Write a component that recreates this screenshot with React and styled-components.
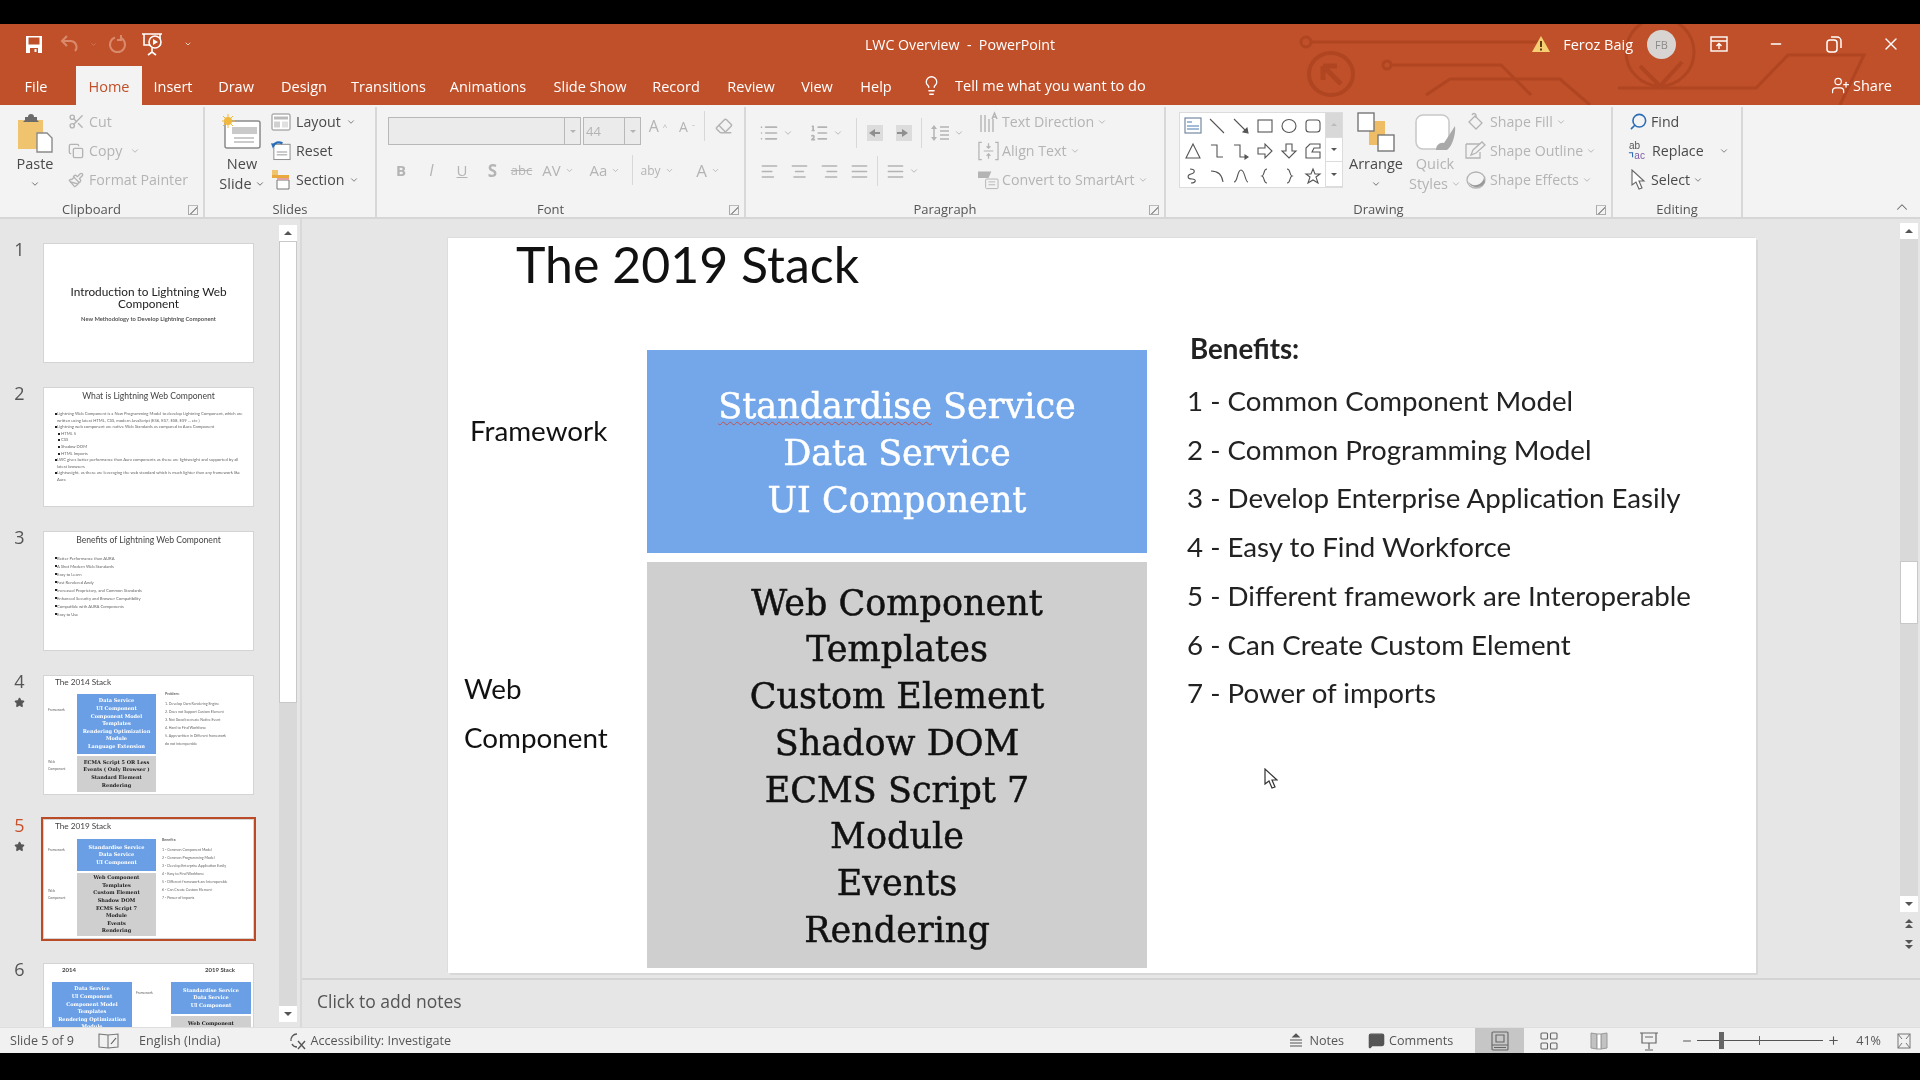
import React from "react";
import styled, { createGlobalStyle } from "styled-components";
import {
  AlignCenter, AlignJustify, AlignLeft, AlignRight, ChevronDown, ChevronUp, Copy, Eraser, Lightbulb,
  List, ListOrdered, MessageSquare, Minus, Paintbrush, Plus, Scissors, Search, Star, UserPlus, X,
} from "lucide-react";

const UI_FONT = `"Open Sans", "Noto Sans", sans-serif`;
const SLIDE_FONT = `Lato, "Open Sans", sans-serif`;
const SLAB_FONT = `"DejaVu Serif", "Liberation Serif", serif`;

const ORANGE = "#c0502a";
const OFF = "#b4b4b4";
const ON = "#4a4a4a";

const GlobalStyle = createGlobalStyle`
  html, body { margin: 0; padding: 0; background: #000; }
  body { font-family: ${UI_FONT}; }
  * { box-sizing: border-box; }
`;

const Screen = styled.div`
  width: 1920px;
  height: 1080px;
  background: #000;
  padding: 24px 0 27px;
  overflow: hidden;
  filter: blur(0.45px);
`;

const Window = styled.div`
  height: 1029px;
  display: flex;
  flex-direction: column;
  background: #e6e6e6;
`;

/* title bar + tabs */
const Header = styled.header`
  position: relative;
  height: 81px;
  background: ${ORANGE};
  color: #fff;
  flex: none;
`;

const Circuit = styled.svg`
  position: absolute;
  top: 0;
  left: 1220px;
  pointer-events: none;
`;

const TitleRow = styled.div`
  position: relative;
  height: 42px;
  padding-bottom: 2px;
  display: grid;
  grid-template-columns: 1fr auto 1fr;
  align-items: center;
`;

const Quick = styled.div`
  display: flex;
  align-items: center;
  padding-left: 14px;
`;

const QuickBtn = styled.span`
  width: ${(p) => p.$w || 24}px;
  height: 20px;
  display: inline-flex;
  align-items: center;
  justify-content: center;
`;

const DocTitle = styled.div`
  font-size: 14.2px;
  white-space: pre;
`;

const Account = styled.div`
  display: flex;
  align-items: center;
  justify-content: flex-end;
`;

const UserName = styled.span`
  font-size: 14.5px;
  margin-left: 12px;
`;

const Avatar = styled.span`
  width: 29px;
  height: 29px;
  border-radius: 50%;
  margin: 0 0 0 14px;
  background: #d8d4d2;
  color: #8a8a8a;
  font-size: 11px;
  display: flex;
  align-items: center;
  justify-content: center;
`;

const WinBtn = styled.span`
  width: 57.5px;
  margin-left: ${(p) => p.$ml || 0}px;
  display: flex;
  justify-content: center;
  align-items: center;
`;

const TabRow = styled.nav`
  position: relative;
  height: 39px;
  display: flex;
  align-items: stretch;
  padding-left: 21px;
`;

const Tab = styled.div`
  display: flex;
  align-items: center;
  justify-content: center;
  font-size: 14.5px;
  padding-top: 1px;
  width: ${(p) => p.$w}px;
  margin-right: ${(p) => p.$mr || 0}px;
  ${(p) => p.$active && `background: #f3f3f3; color: ${ORANGE};`}
`;

const TellMe = styled.div`
  display: flex;
  align-items: center;
  gap: 13px;
  margin-left: 12px;
  font-size: 14.5px;
`;

const Share = styled.div`
  margin-left: auto;
  padding-right: 28px;
  display: flex;
  align-items: center;
  gap: 3px;
  font-size: 14.5px;
`;

/* ribbon */
const Ribbon = styled.section`
  position: relative;
  height: 114px;
  flex: none;
  background: #f3f3f3;
  border-bottom: 2px solid #d6d6d6;
  display: flex;
`;

const Group = styled.div`
  position: relative;
  width: ${(p) => p.$w}px;
  margin-top: 2px;
  height: 110px;
  border-right: 2px solid #d8d8d8;
  display: flex;
  flex-direction: column;
`;

const GroupBody = styled.div`
  height: 94px;
  display: flex;
  padding-left: ${(p) => p.$pl || 0}px;
`;

const GroupLabel = styled.div`
  height: 16px;
  line-height: 16px;
  font-size: 13px;
  color: #555;
  text-align: center;
  padding-right: ${(p) => (p.$launcher ? 20 : 0)}px;
`;

const Launcher = styled.span`
  position: absolute;
  right: 5px;
  bottom: 2px;
  width: 10px;
  height: 10px;
  border: 1px solid #aaa;
  border-top-color: #bbb;
  background: linear-gradient(135deg, transparent 55%, #999 55%, #999 65%, transparent 65%);
`;

const Large = styled.div`
  width: ${(p) => p.$w || 64}px;
  flex: none;
  margin-left: ${(p) => p.$ml || 0}px;
  display: flex;
  flex-direction: column;
  align-items: center;
  padding-top: ${(p) => p.$pt ?? 7}px;
  color: ${(p) => (p.$off ? OFF : ON)};
  font-size: 14.5px;
  line-height: 20px;
`;

const LargeIcon = styled.div`
  height: ${(p) => p.$h || 40}px;
  display: flex;
  align-items: flex-start;
  justify-content: center;
`;

const LineChev = styled.div`
  display: flex;
  align-items: center;
  justify-content: center;
  gap: 3px;
  height: 20px;
`;

const SmallCol = styled.div`
  margin-left: ${(p) => p.$ml || 0}px;
  flex: none;
`;

const SmallItem = styled.div`
  height: 29px;
  display: flex;
  align-items: center;
  gap: ${(p) => p.$gap ?? 5}px;
  color: ${(p) => (p.$off ? OFF : ON)};
  font-size: 14.2px;
  white-space: nowrap;
`;

const IconSlot = styled.span`
  width: ${(p) => p.$w || 20}px;
  display: inline-flex;
  justify-content: center;
  color: ${(p) => (p.$off ? OFF : "#666")};
`;

const ToolStack = styled.div`
  flex: none;
  width: ${(p) => p.$w}px;
`;

const FontBox = styled.div`
  display: flex;
  height: 28px;
  margin-top: 10px;
`;

const Combo = styled.div`
  width: ${(p) => p.$w}px;
  margin-right: 2px;
  border: 1px solid #b8b8b8;
  background: #ebebeb;
  display: flex;
  justify-content: space-between;
  align-items: stretch;
  color: ${OFF};
  font-size: 13px;
  line-height: 26px;
  padding-left: 2px;
`;

const ComboDrop = styled.span`
  width: 16px;
  border-left: 1px solid #b8b8b8;
  display: flex;
  align-items: center;
  justify-content: center;
`;

const ToolRow = styled.div`
  display: flex;
  align-items: center;
  height: ${(p) => p.$h || 26}px;
  margin-top: ${(p) => p.$mt || 0}px;
  margin-left: ${(p) => p.$ml || 0}px;
`;

const Tool = styled.span`
  width: ${(p) => p.$w || 30}px;
  flex: none;
  display: inline-flex;
  align-items: center;
  justify-content: ${(p) => (p.$start ? "flex-start" : "center")};
  padding-left: ${(p) => (p.$start ? 5 : 0)}px;
  gap: 4px;
  color: ${OFF};
  font-size: ${(p) => p.$fs || 15}px;
  font-weight: ${(p) => (p.$bold ? 700 : 400)};
  font-style: ${(p) => (p.$italic ? "italic" : "normal")};
  text-decoration: ${(p) => (p.$under ? "underline" : p.$strike ? "line-through" : "none")};
`;

const GrowMark = styled.sup`
  font-size: 8px;
`;

const ToolSep = styled.span`
  width: 1px;
  height: 30px;
  background: #d8d8d8;
  margin: 0 ${(p) => p.$m || 9}px;
  flex: none;
`;

const Gallery = styled.div`
  margin: 5px 0 0 13px;
  width: 164px;
  height: 76px;
  background: #fff;
  border: 1px solid #dcdcdc;
  display: flex;
  flex: none;
`;

const ShapeGrid = styled.div`
  flex: 1;
  display: grid;
  grid-template-columns: repeat(6, 24px);
  grid-auto-rows: 25px;
  justify-items: center;
  align-items: center;
  padding-left: 1px;
`;

const GalleryBtns = styled.div`
  width: 18px;
  display: flex;
  flex-direction: column;
  border-left: 1px solid #dcdcdc;
`;

const GalleryBtn = styled.span`
  flex: 1;
  display: flex;
  align-items: center;
  justify-content: center;
  background: ${(p) => (p.$off ? "#d8d8d8" : "#fff")};
  border-bottom: 1px solid #dcdcdc;
`;

const Tri = styled.span`
  width: 0;
  height: 0;
  border-left: ${(p) => p.$s || 5}px solid transparent;
  border-right: ${(p) => p.$s || 5}px solid transparent;
  ${(p) => (p.$up ? "border-bottom" : "border-top")}: ${(p) => p.$s || 5}px solid ${(p) => p.$c || "#555"};
`;

const Collapse = styled.span`
  position: absolute;
  right: 9px;
  bottom: 1px;
  color: #666;
  display: flex;
`;

const FindGlass = styled(Search)`
  transform: scaleX(-1);
`;

/* main area */
const Main = styled.main`
  flex: 1;
  display: flex;
  min-height: 0;
`;

const ThumbPane = styled.aside`
  width: 302px;
  flex: none;
  display: flex;
  border-right: 2px solid #d9d9d9;
  padding-right: 3px;
`;

const ThumbList = styled.div`
  flex: 1;
  overflow: hidden;
  padding-top: 25px;
`;

const ThumbRow = styled.div`
  display: flex;
  height: 118px;
  margin-bottom: 26px;
`;

const ThumbNum = styled.div`
  width: 44px;
  padding-right: 5px;
  margin-top: -5px;
  text-align: center;
  font-size: 18px;
  line-height: 20px;
  color: ${(p) => (p.$active ? "#c8502a" : "#555")};
  display: flex;
  flex-direction: column;
  align-items: center;
  gap: 6px;
`;

const Mini = styled.div`
  position: relative;
  width: 209px;
  height: 118px;
  flex: none;
  background: #fff;
  font-family: ${SLIDE_FONT};
  color: #333;
  overflow: hidden;
  box-shadow: 0 0 0 1px #d4d4d4;
`;

const MiniFrame = styled.div`
  width: 209px;
  height: 118px;
  flex: none;
  outline: ${(p) => (p.$active ? `3px solid #bb4a26` : "none")};
`;

const MiniCover = styled.div`
  height: 100%;
  display: flex;
  flex-direction: column;
  justify-content: center;
  align-items: center;
  text-align: center;
  padding: 2px 22px 0;
  font-size: 11.8px;
  line-height: 12px;
  color: #222;
`;

const MiniSub = styled.div`
  font-size: 5.8px;
  font-weight: 700;
  line-height: 8px;
  margin-top: 5px;
  white-space: nowrap;
  color: #555;
`;

const MiniHead = styled.div`
  text-align: center;
  font-size: 8.6px;
  line-height: 12px;
  padding-top: 2px;
  color: #444;
`;

const MiniBullets = styled.ul`
  margin: ${(p) => p.$mt}px 0 0;
  padding: 0 8px 0 13px;
  font-size: 4.2px;
  line-height: ${(p) => p.$lh}px;
  color: #666;
  list-style: none;
`;

const MiniBullet = styled.li`
  position: relative;
  padding-left: ${(p) => (p.$sub ? 4 : 0)}px;
  &::before {
    content: "";
    position: absolute;
    left: ${(p) => (p.$sub ? 1 : -2)}px;
    top: 2px;
    width: 2px;
    height: 2px;
    background: #222;
  }
`;

const MiniStackTitle = styled.div`
  font-size: 8.2px;
  line-height: 12px;
  padding: 0 0 0 11px;
  height: ${(p) => p.$h}px;
  color: #444;
`;

const MiniBody = styled.div`
  display: grid;
  grid-template-columns: 33px 79px 1fr;
`;

const MiniLabels = styled.div`
  display: flex;
  flex-direction: column;
  font-size: 3.4px;
  color: #666;
  padding-left: 4px;
`;

const MiniLabel = styled.div`
  height: ${(p) => p.$h}px;
  padding-top: ${(p) => p.$pt}px;
  line-height: 7px;
`;

const MiniBox = styled.div`
  background: ${(p) => (p.$blue ? "#6a9fe6" : "#cfcfcf")};
  color: ${(p) => (p.$blue ? "#fff" : "#222")};
  font-family: ${SLAB_FONT};
  font-size: 5px;
  font-weight: 700;
  line-height: 7.6px;
  height: ${(p) => p.$h}px;
  margin-bottom: ${(p) => p.$mb || 0}px;
  white-space: nowrap;
  overflow: hidden;
  display: flex;
  flex-direction: column;
  justify-content: center;
  align-items: center;
`;

const MiniNotes = styled.div`
  font-size: 3.6px;
  line-height: 8px;
  color: #666;
  margin-top: ${(p) => p.$mt}px;
  padding: 0 2px 0 ${(p) => p.$pl}px;
  white-space: nowrap;
`;

const MiniNotesHead = styled.div`
  font-weight: 700;
  margin-bottom: 2px;
`;

const MiniDouble = styled.div`
  display: grid;
  grid-template-columns: 80px 39px 80px;
  padding: 0 2px 0 8px;
`;

const MiniYears = styled.div`
  display: flex;
  justify-content: space-between;
  font-size: 6px;
  line-height: 10px;
  padding: 1px 18px 7px 18px;
  color: #444;
  font-weight: 700;
`;

const Scroll = styled.div`
  width: ${(p) => p.$w || 18}px;
  flex: none;
  display: flex;
  flex-direction: column;
  padding-top: ${(p) => p.$pt || 6}px;
  margin-right: ${(p) => p.$mr || 0}px;
`;

const ScrollBtn = styled.span`
  height: 16px;
  flex: none;
  background: #fff;
  display: flex;
  align-items: center;
  justify-content: center;
`;

const ScrollPlain = styled(ScrollBtn)`
  background: transparent;
  height: ${(p) => p.$h}px;
  flex-direction: column;
  gap: 1px;
`;

const ScrollTrack = styled.div`
  background: #d9d9d9;
  flex: ${(p) => (p.$h ? "none" : 1)};
  height: ${(p) => (p.$h ? `${p.$h}px` : "auto")};
`;

const ScrollThumb = styled.div`
  background: #fff;
  height: ${(p) => p.$h}px;
  flex: none;
  border: 1px solid #c8c8c8;
`;

const Editor = styled.div`
  flex: 1;
  min-width: 0;
  display: flex;
  flex-direction: column;
`;

const Workspace = styled.div`
  height: 761px;
  flex: none;
  display: flex;
  border-bottom: 2px solid #d4d4d4;
`;

const Stage = styled.div`
  flex: 1;
  padding: 19px 0 0 146px;
`;

const Slide = styled.article`
  position: relative;
  width: 1308px;
  height: 735px;
  background: #fff;
  box-shadow: 2px 2px 0 #d8d8d8, -1px -1px 0 #dddddd;
  font-family: ${SLIDE_FONT};
  color: #111;
  overflow: hidden;
`;

const SlideTitle = styled.h1`
  margin: 0;
  height: 92px;
  padding: 0 0 0 68px;
  font-size: 50px;
  font-weight: 400;
  line-height: 52px;
`;

const SlideBody = styled.div`
  display: grid;
  grid-template-columns: 199px 500px 1fr;
`;

const Labels = styled.div`
  font-size: 27.8px;
  padding-top: 20px;
`;

const Label = styled.div`
  height: ${(p) => p.$h}px;
  padding-left: ${(p) => p.$pl}px;
  padding-top: ${(p) => p.$pt}px;
  line-height: 49px;
`;

const Boxes = styled.div`
  padding-top: 20px;
  display: flex;
  flex-direction: column;
  gap: 9px;
`;

const Box = styled.div`
  height: ${(p) => p.$h}px;
  padding-top: ${(p) => (p.$blue ? 4 : 3)}px;
  background: ${(p) => (p.$blue ? "#74a7ea" : "#cfcfcf")};
  color: ${(p) => (p.$blue ? "#fff" : "#111")};
  font-family: ${SLAB_FONT};
  font-size: 35px;
  -webkit-text-stroke: 0.5px currentColor;
  line-height: ${(p) => p.$lh}px;
  display: flex;
  flex-direction: column;
  justify-content: center;
  text-align: center;
`;

const Squiggle = styled.span`
  text-decoration: underline wavy #c0524d 1px;
  text-underline-offset: 3px;
`;

const Benefits = styled.div`
  padding-left: 40px;
  font-size: 27.7px;
  color: #222;
`;

const BenefitsHead = styled.div`
  padding-left: 3px;
  font-weight: 700;
  line-height: 38px;
  margin-bottom: 9px;
`;

const BenefitItem = styled.div`
  line-height: 48.7px;
  white-space: nowrap;
`;

const Pointer = styled.svg`
  position: absolute;
  left: 816px;
  top: 530px;
`;

const NotesBar = styled.div`
  flex: 1;
  padding: 9px 0 0 15px;
  font-size: 17.5px;
  color: #555;
`;

/* status bar */
const Status = styled.footer`
  height: 26px;
  flex: none;
  display: flex;
  align-items: stretch;
  background: #f1f1f1;
  border-top: 1px solid #dedede;
  color: #555;
  font-size: 12.6px;
  padding-right: 9px;
`;

const StatusText = styled.span`
  flex: none;
  display: flex;
  align-items: center;
  gap: ${(p) => p.$gap || 4}px;
  margin-left: ${(p) => (p.$auto ? "auto" : `${p.$ml || 0}px`)};
  white-space: nowrap;
  color: #555;
`;

const StatusView = styled.span`
  flex: none;
  width: ${(p) => p.$w || 50}px;
  margin-left: ${(p) => p.$ml || 0}px;
  display: flex;
  align-items: center;
  justify-content: center;
  background: ${(p) => (p.$active ? "#c6c6c6" : "transparent")};
`;

const Zoomer = styled.div`
  flex: none;
  display: flex;
  align-items: center;
  margin-left: 7px;
  gap: 4px;
`;

const ZoomTrack = styled.span`
  position: relative;
  width: 126px;
  height: 1px;
  background: #555;
`;

const ZoomThumb = styled.span`
  position: absolute;
  left: 22px;
  top: -8px;
  width: 5px;
  height: 17px;
  background: #666;
`;

const ZoomTick = styled.span`
  position: absolute;
  left: 62px;
  top: -4px;
  width: 1px;
  height: 9px;
  background: #666;
`;

/* drawings */
const SaveIcon = () => (
  <svg width="18" height="19" viewBox="0 0 18 19" fill="none">
    <path d="M1 1h16v17H1z" fill="#fff" />
    <path d="M3.5 2.5h11v7h-11z" fill={ORANGE} />
    <path d="M5 13h8v5H5z" fill={ORANGE} />
    <path d="M9.5 14h2v3h-2z" fill="#fff" />
  </svg>
);

const UndoIcon = ({ c }) => (
  <svg width="20" height="20" viewBox="0 0 20 20" fill="none" stroke={c} strokeWidth="2">
    <path d="M7 2 2 7l5 5" />
    <path d="M2 7h9a6 6 0 0 1 4 10" />
  </svg>
);

const RedoIcon = ({ c }) => (
  <svg width="20" height="20" viewBox="0 0 20 20" fill="none" stroke={c} strokeWidth="2">
    <path d="M12 3.500a7.500 7.500 0 1 1-5 0" />
    <path d="M13 1v5h-4" />
  </svg>
);

const PresentIcon = () => (
  <svg width="22" height="24" viewBox="0 0 22 24" fill="none" stroke="#fff" strokeWidth="1.6">
    <path d="M0 2h20M2 2v11h16V2" />
    <path d="M10 14v6M6 23l4-3 4 3" />
    <circle cx="13" cy="10" r="6" fill={ORANGE} />
    <path d="M11 7l5 3-5 3z" fill="#fff" stroke="none" />
  </svg>
);

const WarningIcon = () => (
  <svg width="20" height="18" viewBox="0 0 20 18">
    <path d="M10 1l9 16H1z" fill="#f5cf72" />
    <path d="M9 6h2v6H9zM9 13.500h2v2H9z" fill="#5b3a1a" />
  </svg>
);

const PasteIcon = () => (
  <svg width="37" height="40" viewBox="0 0 37 40" fill="none">
    <path d="M1 6h25v29H1z" fill="#f0c36e" />
    <path d="M8 6V3h3a3 3 0 0 1 6 0h3v3l2 2H6z" fill="#6b6b6b" />
    <path d="M20 19h10l5 5v14H20z" fill="#fff" stroke="#8a8a8a" strokeWidth="1.4" />
  </svg>
);

const NewSlideIcon = () => (
  <svg width="40" height="36" viewBox="0 0 40 36" fill="none">
    <rect x="3" y="7" width="35" height="27" rx="2" fill="#fff" stroke="#8a8a8a" strokeWidth="1.5" />
    <path d="M10 13h25v7H10z" fill="#c9c9c9" />
    <path d="M12 24h20M12 28h20" stroke="#bbb" strokeWidth="1.3" />
    <circle cx="6" cy="7" r="4" fill="#f0b83c" />
    <path d="M6 0v14M-1 7h14M1 2l10 10M11 2 1 12" stroke="#f0b83c" strokeWidth="1" />
  </svg>
);

const LayoutIcon = () => (
  <svg width="20" height="20" viewBox="0 0 20 20" fill="none">
    <rect x="1" y="2" width="18" height="16" rx="1" fill="#fff" stroke="#8a8a8a" />
    <path d="M3 4.500h14v3H3z" fill="#bbb" />
    <path d="M3 9.500h6v6H3z" fill="#d0d0d0" />
    <path d="M11 9.500h6v6h-6z" fill="#e0e0e0" />
  </svg>
);

const ResetIcon = () => (
  <svg width="21" height="21" viewBox="0 0 21 21" fill="none">
    <rect x="3" y="4" width="17" height="16" fill="#fff" stroke="#8a8a8a" />
    <path d="M6 12h11M6 15h11" stroke="#bbb" strokeWidth="1.5" />
    <path d="M2 6c2-4 6-5 10-3" stroke="#2b6cb8" strokeWidth="2.4" />
    <path d="M0 3l5 .500-3 5z" fill="#2b6cb8" />
  </svg>
);

const SectionIcon = () => (
  <svg width="20" height="22" viewBox="0 0 20 22" fill="none">
    <path d="M1 1h6v5H1z" fill="#f0c36e" />
    <path d="M1 6h17v3H1z" fill="#e9a93e" />
    <path d="M6 11h12v9H6z" fill="#fff" stroke="#777" />
    <path d="M6 9h12v2H6z" fill="#e0a0a0" />
  </svg>
);

const DirectionIcon = () => (
  <svg width="20" height="22" viewBox="0 0 20 22" fill="none" stroke={OFF} strokeWidth="1.4">
    <path d="M2 4v17M6 4v17M10 8v13M14 8v13" />
    <path d="M13 8l2.500-6 2.500 6M14 6h3" />
  </svg>
);

const AlignTextIcon = () => (
  <svg width="22" height="20" viewBox="0 0 22 20" fill="none" stroke={OFF} strokeWidth="1.3">
    <path d="M4 1H1v18h3M18 1h3v18h-3" />
    <path d="M6 10h10M11 2v5M9 5l2 2 2-2M11 18v-5M9 15l2-2 2 2" />
  </svg>
);

const SmartArtIcon = () => (
  <svg width="22" height="20" viewBox="0 0 22 20" fill={OFF}>
    <path d="M0 1h14l-3 7H0z" />
    <rect x="8" y="9" width="13" height="10" rx="1" fill="none" stroke={OFF} />
    <path d="M11 12h7M11 15h7" stroke={OFF} />
  </svg>
);

const FillIcon = () => (
  <svg width="20" height="20" viewBox="0 0 20 20" fill="none" stroke={OFF} strokeWidth="1.3">
    <path d="M9 4l7 7-6 6-7-7z" />
    <path d="M6 3c1-2 3-2 4 0v3" />
  </svg>
);

const OutlineIcon = () => (
  <svg width="22" height="20" viewBox="0 0 22 20" fill="none" stroke={OFF} strokeWidth="1.3">
    <path d="M1 3h14M1 3v14h14v-6" />
    <path d="M6 14l2-5 9-8 3 3-9 8z" fill="#f3f3f3" />
  </svg>
);

const EffectsIcon = () => (
  <svg width="20" height="20" viewBox="0 0 20 20">
    <ellipse cx="10" cy="10" rx="9" ry="8" fill="#f4f4f4" stroke={OFF} strokeWidth="1.3" />
    <path d="M2 11c3 6 13 6 16-3l1 4c-2 6-14 8-17-1z" fill="#9a9a9a" />
  </svg>
);

const ArrangeIcon = () => (
  <svg width="38" height="40" viewBox="0 0 38 40" fill="none">
    <path d="M12 9h16v24H12z" fill="#efbd66" />
    <rect x="1" y="1" width="16" height="18" fill="#fff" stroke="#777" strokeWidth="1.4" />
    <rect x="21" y="23" width="16" height="16" fill="#fff" stroke="#777" strokeWidth="1.4" />
  </svg>
);

const QuickStylesIcon = () => (
  <svg width="42" height="40" viewBox="0 0 42 40" fill="none">
    <rect x="2" y="1" width="33" height="34" rx="7" fill="#fff" stroke="#c8c8c8" strokeWidth="1.5" />
    <path d="M22 36c0-5 4-8 8-7l11-17c1 6-2 20-8 24z" fill="#a9a9a9" />
  </svg>
);

const ReplaceIcon = () => (
  <svg width="22" height="24" viewBox="0 0 22 24">
    <text x="1" y="10" fontSize="11" fontFamily="Liberation Sans" fill="#555">ab</text>
    <text x="7" y="21" fontSize="11" fontFamily="Liberation Sans" fill="#7b5aa6">ac</text>
    <path d="M1 14h4v5" stroke="#2b6cb8" fill="none" strokeWidth="1.2" />
  </svg>
);

const SelectIcon = () => (
  <svg width="16" height="22" viewBox="0 0 16 22" fill="#fff" stroke="#666" strokeWidth="1.1">
    <path d="M2 1v15l4-3 3 7 3-1-3-7h5z" />
  </svg>
);

const IndentIcon = ({ flip }) => (
  <svg width="20" height="20" viewBox="0 0 20 20">
    <path d="M2 2h16v16H2z" fill="#dcdcdc" />
    <path d={flip ? "M10 6v8l-6-4z" : "M8 6v8l6-4z"} fill="#8f8f8f" />
    <path d={flip ? "M10 9h5v2h-5z" : "M3 9h5v2H3z"} fill="#8f8f8f" />
  </svg>
);

const LineSpacingIcon = () => (
  <svg width="20" height="20" viewBox="0 0 20 20" fill={OFF} stroke={OFF} strokeWidth="1.5">
    <path d="M4 4v12" />
    <path d="M1 6l3-4 3 4zM1 14l3 4 3-4z" stroke="none" />
    <path d="M10 4h9M10 8h9M10 12h9M10 16h9" />
  </svg>
);

const ReadingIcon = () => (
  <svg width="18" height="20" viewBox="0 0 18 20" fill="#c2c2c2" stroke="#999">
    <path d="M1 2l6 1v15l-6-1zM17 2l-6 1v15l6-1z" />
    <path d="M7 3h4v15H7z" fill="#fff" />
  </svg>
);

const NormalViewIcon = () => (
  <svg width="18" height="20" viewBox="0 0 18 20" fill="none" stroke="#666" strokeWidth="1.1">
    <rect x="1" y="1" width="16" height="18" rx="1" />
    <path d="M1 14h16M3 16.500h12M5 4h8v7H5z" />
  </svg>
);

const SorterIcon = () => (
  <svg width="18" height="18" viewBox="0 0 18 18" fill="none" stroke="#666" strokeWidth="1.1">
    <rect x="1" y="1" width="6.500" height="6" rx="1" />
    <rect x="10.500" y="1" width="6.500" height="6" rx="1" />
    <rect x="1" y="11" width="6.500" height="6" rx="1" />
    <rect x="10.500" y="11" width="6.500" height="6" rx="1" />
  </svg>
);

const SlideShowIcon = () => (
  <svg width="18" height="20" viewBox="0 0 18 20" fill="none" stroke="#666" strokeWidth="1.2">
    <path d="M0 2h18M2 2v10h14V2M9 12v6M5 19h8M5 6h8" />
  </svg>
);

const FitIcon = () => (
  <svg width="14" height="16" viewBox="0 0 14 16" fill="none" stroke="#777">
    <rect x="1" y="1" width="12" height="14" />
    <path d="M1 1l4 5M13 1 9 6M1 15l4-5M13 15l-4-5" />
  </svg>
);

const NotesIcon = () => (
  <svg width="14" height="16" viewBox="0 0 14 16" fill="none" stroke="#555" strokeWidth="1.2">
    <path d="M4 4l3-3 3 3z" fill="#555" />
    <path d="M1 7h12M1 10h12M1 13h12" />
  </svg>
);

const SpellIcon = () => (
  <svg width="22" height="18" viewBox="0 0 22 18" fill="none" stroke="#777" strokeWidth="1.1">
    <path d="M1 2l9 1v13l-9-1zM10 3l10-1v13l-10 1" />
    <path d="M13 12l5-6" stroke="#555" />
  </svg>
);

const AccessIcon = () => (
  <svg width="18" height="18" viewBox="0 0 18 18" fill="none" stroke="#555" strokeWidth="1.4">
    <path d="M8 2a6 6 0 0 0-6 7" />
    <path d="M3 12c1 2 3 3 5 3" />
    <path d="M9 9l7 8M16 9l-7 8" />
  </svg>
);

const shapes = [
  <><rect x="1" y="1" width="16" height="15" fill="#fff" stroke="#6a7f9a" /><path d="M3 5h5M3 9h12M3 12h12" stroke="#4a78b0" /></>,
  <path d="M2 2l14 14" />,
  <><path d="M2 2l13 13" /><path d="M16 16l-5-1 4-4z" fill="#555" /></>,
  <rect x="2" y="3" width="14" height="12" />,
  <ellipse cx="9" cy="9" rx="7" ry="6.500" />,
  <rect x="2" y="3" width="14" height="12" rx="3" />,
  <path d="M9 2l7 14H2z" />,
  <path d="M3 3h6v12h6" />,
  <><path d="M2 3h6v12h6" /><path d="M16 15l-3-2v4z" fill="#555" /></>,
  <path d="M2 6h7V2l7 7-7 7v-4H2z" />,
  <path d="M6 2h6v7h4l-7 7-7-7h4z" />,
  <path d="M2 16V6l4-4h10v4h-6l-2 4h8v6z" />,
  <path d="M6 2c6 0 5 4 1 5s-4 5 1 5 4 4-1 4" />,
  <path d="M3 4c6 0 11 3 12 11" />,
  <path d="M2 15c4 0 3-12 7-12s4 12 7 12" />,
  <path d="M11 2C7 2 9 8 6 9c3 1 1 7 5 7" />,
  <path d="M7 2c4 0 2 6 5 7-3 1-1 7-5 7" />,
  <path d="M9 2l2 5h5l-4 3 2 6-5-3-5 3 2-6-4-3h5z" />,
];

const Chev = ({ c = "#999", s = 10 }) => <ChevronDown size={s} color={c} strokeWidth={2.2} />;

const Small = ({ off, icon, w, chev, children, gap }) => (
  <SmallItem $off={off} $gap={gap}>
    <IconSlot $w={w} $off={off}>{icon}</IconSlot>
    {children}
    {chev && <Chev c={off ? OFF : "#777"} />}
  </SmallItem>
);

const stack2019 = ["Standardise Service", "Data Service", "UI Component"];
const web2019 = ["Web Component", "Templates", "Custom Element", "Shadow DOM", "ECMS Script 7", "Module", "Events", "Rendering"];
const benefits2019 = [
  "1 - Common Component Model",
  "2 - Common Programming Model",
  "3 - Develop Enterprise Application Easily",
  "4 - Easy to Find Workforce",
  "5 - Different framework are Interoperable",
  "6 - Can Create Custom Element",
  "7 - Power of imports",
];
const stack2014 = ["Data Service", "UI Component", "Component Model", "Templates", "Rendering Optimization", "Module", "Language Extension"];
const web2014 = ["ECMA Script 5 OR Less", "Events ( Only Browser )", "Standard Element", "Rendering"];
const problems2014 = [
  "1. Develop Own Rendering Engine",
  "2. Does not Support Custom Element",
  "3. Not Good to create Native Event",
  "4. Hard to Find Workforce",
  "5. Apps written in Different framework",
  "    do not interoperable",
];

const lines = (arr) => arr.map((t) => <div key={t}>{t}</div>);

const MiniStack = ({ title, blue, gray, notes, head, blueH, grayH, titleH, fw, webPt, notesTop, notesLeft }) => (
  <Mini>
    <MiniStackTitle $h={titleH}>{title}</MiniStackTitle>
    <MiniBody>
      <MiniLabels>
        <MiniLabel $h={blueH + 2} $pt={fw}>Framework</MiniLabel>
        <MiniLabel $h={grayH} $pt={webPt}>Web<br />Component</MiniLabel>
      </MiniLabels>
      <div>
        <MiniBox $blue $h={blueH} $mb={2}>{lines(blue)}</MiniBox>
        <MiniBox $h={grayH}>{lines(gray)}</MiniBox>
      </div>
      <MiniNotes $mt={notesTop} $pl={notesLeft}>
        <MiniNotesHead>{head}</MiniNotesHead>
        {lines(notes)}
      </MiniNotes>
    </MiniBody>
  </Mini>
);

const thumbs = [
  <Mini>
    <MiniCover>
      Introduction to Lightning Web Component
      <MiniSub>New Methodology to Develop Lightning Component</MiniSub>
    </MiniCover>
  </Mini>,
  <Mini>
    <MiniHead>What is Lightning Web Component</MiniHead>
    <MiniBullets $mt={9} $lh={6.6}>
      <MiniBullet>Lightning Web Component is a New Programming Model to develop Lightning Component, which are written using latest HTML, CSS, modern JavaScript (ES6, ES7, ES8, ES9 ... etc )</MiniBullet>
      <MiniBullet>Lightning web component are native Web Standards as compared to Aura Component</MiniBullet>
      <MiniBullet $sub>HTML 5</MiniBullet>
      <MiniBullet $sub>CSS</MiniBullet>
      <MiniBullet $sub>Shadow DOM</MiniBullet>
      <MiniBullet $sub>HTML Imports</MiniBullet>
      <MiniBullet>LWC gives better performance than Aura components as these are lightweight and supported by all latest browsers</MiniBullet>
      <MiniBullet>Lightweight, as these are leveraging the web standard which is much lighter than any framework like Aura</MiniBullet>
    </MiniBullets>
  </Mini>,
  <Mini>
    <MiniHead>Benefits of Lightning Web Component</MiniHead>
    <MiniBullets $mt={9} $lh={8}>
      <MiniBullet>Better Performance than AURA</MiniBullet>
      <MiniBullet>A Shot Modern Web Standards</MiniBullet>
      <MiniBullet>Easy to Learn</MiniBullet>
      <MiniBullet>Fast Rendered Andy</MiniBullet>
      <MiniBullet>Increased Proprietary, and Common Standards</MiniBullet>
      <MiniBullet>Enhanced Security and Browser Compatibility</MiniBullet>
      <MiniBullet>Compatible with AURA Components</MiniBullet>
      <MiniBullet>Easy to Use</MiniBullet>
    </MiniBullets>
  </Mini>,
  <MiniStack title="The 2014 Stack" blue={stack2014} gray={web2014} notes={problems2014} head="Problem:" blueH={60} grayH={36} titleH={18} fw={13} webPt={3} notesTop={-4} notesLeft={9} />,
  <MiniStack title="The 2019 Stack" blue={stack2019} gray={web2019} notes={benefits2019} head="Benefits:" blueH={32} grayH={63} titleH={19} fw={8} webPt={15} notesTop={-3} notesLeft={6} />,
  <Mini>
    <MiniYears><span>2014</span><span>2019 Stack</span></MiniYears>
    <MiniDouble>
      <MiniBox $blue $h={60}>{lines(stack2014)}</MiniBox>
      <MiniLabels><MiniLabel $h={14} $pt={8}>Framework</MiniLabel></MiniLabels>
      <div>
        <MiniBox $blue $h={32} $mb={2}>{lines(stack2019)}</MiniBox>
        <MiniBox $h={30}>{lines(web2019.slice(0, 3))}</MiniBox>
      </div>
    </MiniDouble>
  </Mini>,
];

const App = () => (
  <>
    <GlobalStyle />
    <Screen>
      <Window>
        <Header>
          <Circuit width="700" height="81" viewBox="0 0 700 81" fill="none" stroke="#b04522" strokeWidth="3">
            <circle cx="86" cy="18" r="5" />
            <path d="M91 18h230" />
            <ellipse cx="111" cy="50" rx="22" ry="21" strokeWidth="4" />
            <path d="M103 42h14M103 42v14M103 42l18 18" strokeWidth="5" />
            <circle cx="167" cy="41" r="4" />
            <path d="M171 41h110l30 30" />
            <path d="M206 71l24-16h110l30 26" />
            <path d="M398 64h138l32-33h76l-24 50" />
            <circle cx="440" cy="28" r="34" />
            <path d="M420 42l20 20 22-24" strokeWidth="4" />
          </Circuit>
          <TitleRow>
            <Quick>
              <QuickBtn $w={40}><SaveIcon /></QuickBtn>
              <QuickBtn $w={32}><UndoIcon c="#d98a6c" /></QuickBtn>
              <QuickBtn $w={14}><Chev c="#d98a6c" s={7} /></QuickBtn>
              <QuickBtn $w={36}><RedoIcon c="#d98a6c" /></QuickBtn>
              <QuickBtn $w={34}><PresentIcon /></QuickBtn>
              <QuickBtn $w={36}><Chev c="#fff" s={8} /></QuickBtn>
            </Quick>
            <DocTitle>{"LWC Overview  -  PowerPoint"}</DocTitle>
            <Account>
              <WarningIcon />
              <UserName>Feroz Baig</UserName>
              <Avatar>FB</Avatar>
              <WinBtn $ml={14}>
                <svg width="18" height="16" viewBox="0 0 18 16" fill="none" stroke="#fff" strokeWidth="1.4">
                  <rect x="1" y="1" width="16" height="14" />
                  <path d="M1 5h16M9 13V8M6.500 10 9 7.500l2.500 2.500" />
                </svg>
              </WinBtn>
              <WinBtn><Minus size={16} color="#fff" /></WinBtn>
              <WinBtn>
                <svg width="16" height="18" viewBox="0 0 16 18" fill="none" stroke="#fff" strokeWidth="1.5">
                  <rect x="1" y="5" width="10" height="12" rx="3" />
                  <path d="M5 2h6a4 4 0 0 1 4 4v7" />
                </svg>
              </WinBtn>
              <WinBtn><X size={20} color="#fff" strokeWidth={1.6} /></WinBtn>
            </Account>
          </TitleRow>
          <TabRow>
            <Tab $w={30} $mr={25}>File</Tab>
            <Tab $w={66} $active>Home</Tab>
            <Tab $w={62}>Insert</Tab>
            <Tab $w={64}>Draw</Tab>
            <Tab $w={72}>Design</Tab>
            <Tab $w={97}>Transitions</Tab>
            <Tab $w={102}>Animations</Tab>
            <Tab $w={102}>Slide Show</Tab>
            <Tab $w={70}>Record</Tab>
            <Tab $w={80}>Review</Tab>
            <Tab $w={52}>View</Tab>
            <Tab $w={66}>Help</Tab>
            <TellMe>
              <Lightbulb size={21} color="#fff" strokeWidth={1.5} />
              Tell me what you want to do
            </TellMe>
            <Share><UserPlus size={19} color="#fff" strokeWidth={1.5} />Share</Share>
          </TabRow>
        </Header>

        <Ribbon>
          <Group $w={205}>
            <GroupBody $pl={3}>
              <Large><LargeIcon><PasteIcon /></LargeIcon>Paste<LineChev><Chev c="#666" /></LineChev></Large>
              <SmallCol>
                <Small off w={18} gap={4} icon={<Scissors size={17} />}>Cut</Small>
                <Small off w={18} gap={4} icon={<Copy size={16} />} chev>Copy<span /></Small>
                <Small off w={18} gap={4} icon={<Paintbrush size={16} />}>Format Painter</Small>
              </SmallCol>
            </GroupBody>
            <GroupLabel $launcher>Clipboard</GroupLabel>
            <Launcher />
          </Group>

          <Group $w={172}>
            <GroupBody $pl={5}>
              <Large><LargeIcon><NewSlideIcon /></LargeIcon>New<LineChev>Slide <Chev c="#666" /></LineChev></Large>
              <SmallCol $ml={-3}>
                <Small w={20} icon={<LayoutIcon />} chev>Layout</Small>
                <Small w={20} icon={<ResetIcon />}>Reset</Small>
                <Small w={20} icon={<SectionIcon />} chev>Section</Small>
              </SmallCol>
            </GroupBody>
            <GroupLabel>Slides</GroupLabel>
          </Group>

          <Group $w={369}>
            <GroupBody $pl={11}>
              <ToolStack $w={358}>
                <ToolRow $h={38}>
                  <FontBox>
                    <Combo $w={193}><span /><ComboDrop><Tri $s={3} $c={OFF} /></ComboDrop></Combo>
                    <Combo $w={58}>44<ComboDrop><Tri $s={3} $c={OFF} /></ComboDrop></Combo>
                  </FontBox>
                  <Tool $w={30} $fs={16}>A<GrowMark>^</GrowMark></Tool>
                  <Tool $w={28} $fs={14}>A<GrowMark>ˇ</GrowMark></Tool>
                  <ToolSep $m={3} />
                  <Tool $w={32}><Eraser size={18} /></Tool>
                </ToolRow>
                <ToolRow $mt={12} $ml={-2}>
                  <Tool $bold>B</Tool>
                  <Tool $italic $w={31} $fs={16}>I</Tool>
                  <Tool $under $w={30}>U</Tool>
                  <Tool $bold $w={31} $fs={17}>S</Tool>
                  <Tool $strike $w={27} $fs={13}>abc</Tool>
                  <Tool $w={46}>AV <Chev c={OFF} s={9} /></Tool>
                  <Tool $w={48}>Aa <Chev c={OFF} s={9} /></Tool>
                  <ToolSep $m={3} />
                  <Tool $w={42} $fs={12}>aby <Chev c={OFF} s={9} /></Tool>
                  <Tool $w={60} $fs={17}>A <Chev c={OFF} s={9} /></Tool>
                </ToolRow>
              </ToolStack>
            </GroupBody>
            <GroupLabel $launcher>Font</GroupLabel>
            <Launcher />
          </Group>

          <Group $w={420}>
            <GroupBody $pl={8}>
              <ToolStack $w={224}>
                <ToolRow $mt={11} $h={30}>
                  <Tool $w={50} $start><List size={20} />  <Chev c={OFF} /></Tool>
                  <Tool $w={49} $start><ListOrdered size={20} /> <Chev c={OFF} /></Tool>
                  <ToolSep $m={3} />
                  <Tool $w={29}><IndentIcon flip /></Tool>
                  <Tool $w={29}><IndentIcon /></Tool>
                  <ToolSep $m={3} />
                  <Tool $w={46} $start><LineSpacingIcon /><Chev c={OFF} /></Tool>
                </ToolRow>
                <ToolRow $mt={8} $h={30}>
                  <Tool $w={30}><AlignLeft size={19} /></Tool>
                  <Tool $w={30}><AlignCenter size={19} /></Tool>
                  <Tool $w={30}><AlignRight size={19} /></Tool>
                  <Tool $w={30}><AlignJustify size={19} /></Tool>
                  <ToolSep $m={3} />
                  <Tool $w={48} $start><AlignJustify size={19} /><Chev c={OFF} /></Tool>
                </ToolRow>
              </ToolStack>
              <SmallCol>
                <Small off w={21} gap={3} icon={<DirectionIcon />} chev>Text Direction</Small>
                <Small off w={21} gap={3} icon={<AlignTextIcon />} chev>Align Text</Small>
                <Small off w={21} gap={3} icon={<SmartArtIcon />} chev>Convert to SmartArt</Small>
              </SmallCol>
            </GroupBody>
            <GroupLabel $launcher>Paragraph</GroupLabel>
            <Launcher />
          </Group>

          <Group $w={447}>
            <GroupBody>
              <Gallery>
                <ShapeGrid>
                  {shapes.map((s, i) => (
                    <svg key={i} width="18" height="18" viewBox="0 0 18 18" fill="none" stroke="#555" strokeWidth="1.1">{s}</svg>
                  ))}
                </ShapeGrid>
                <GalleryBtns>
                  <GalleryBtn $off><Tri $up $s={3} $c="#bbb" /></GalleryBtn>
                  <GalleryBtn><Tri $s={3} /></GalleryBtn>
                  <GalleryBtn><Tri $s={3} /></GalleryBtn>
                </GalleryBtns>
              </Gallery>
              <Large $w={60} $ml={3} $pt={5}>
                <LargeIcon $h={42}><ArrangeIcon /></LargeIcon>Arrange<LineChev><Chev c="#666" /></LineChev>
              </Large>
              <Large $w={58} $off $pt={7}>
                <LargeIcon><QuickStylesIcon /></LargeIcon>Quick<LineChev>Styles <Chev c={OFF} /></LineChev>
              </Large>
              <SmallCol $ml={1}>
                <Small off w={22} gap={3} icon={<FillIcon />} chev>Shape Fill</Small>
                <Small off w={22} gap={3} icon={<OutlineIcon />} chev>Shape Outline</Small>
                <Small off w={22} gap={3} icon={<EffectsIcon />} chev>Shape Effects</Small>
              </SmallCol>
            </GroupBody>
            <GroupLabel $launcher>Drawing</GroupLabel>
            <Launcher />
          </Group>

          <Group $w={130}>
            <GroupBody $pl={15}>
              <SmallCol>
                <Small w={20} gap={3} icon={<FindGlass size={19} color="#2b6cb8" />}>Find</Small>
                <Small w={20} gap={4} icon={<ReplaceIcon />} chev>Replace&nbsp;&nbsp;&nbsp;</Small>
                <Small w={20} gap={3} icon={<SelectIcon />} chev>Select</Small>
              </SmallCol>
            </GroupBody>
            <GroupLabel>Editing</GroupLabel>
          </Group>
          <Collapse><ChevronUp size={18} strokeWidth={1.4} /></Collapse>
        </Ribbon>

        <Main>
          <ThumbPane>
            <ThumbList>
              {thumbs.map((t, i) => (
                <ThumbRow key={i}>
                  <ThumbNum $active={i === 4}>
                    {i + 1}
                    {(i === 3 || i === 4) && <Star size={11} color="#555" fill="#555" />}
                  </ThumbNum>
                  <MiniFrame $active={i === 4}>{t}</MiniFrame>
                </ThumbRow>
              ))}
            </ThumbList>
            <Scroll>
              <ScrollBtn><Tri $up $s={4} /></ScrollBtn>
              <ScrollThumb $h={462} />
              <ScrollTrack />
              <ScrollBtn><Tri $s={4} /></ScrollBtn>
              <ScrollPlain $h={5} />
            </Scroll>
          </ThumbPane>

          <Editor>
            <Workspace>
              <Stage>
                <Slide>
                  <SlideTitle>The 2019 Stack</SlideTitle>
                  <SlideBody>
                    <Labels>
                      <Label $h={212} $pl={22} $pt={56}>Framework</Label>
                      <Label $h={200} $pl={16} $pt={102}>Web<br />Component</Label>
                    </Labels>
                    <Boxes>
                      <Box $blue $h={203} $lh={47}>
                        <div><Squiggle>Standardise</Squiggle> Service</div>
                        <div>Data Service</div>
                        <div>UI Component</div>
                      </Box>
                      <Box $h={406} $lh={46.7}>{lines(web2019)}</Box>
                    </Boxes>
                    <Benefits>
                      <BenefitsHead>Benefits:</BenefitsHead>
                      {benefits2019.map((b) => <BenefitItem key={b}>{b}</BenefitItem>)}
                    </Benefits>
                  </SlideBody>
                  <Pointer width="14" height="21" viewBox="0 0 14 21" fill="#fff" stroke="#333" strokeWidth="1.2">
                    <path d="M1 1v15l4-3 3 7 3-1-3-7h5z" />
                  </Pointer>
                </Slide>
              </Stage>
              <Scroll $w={18} $pt={4} $mr={2}>
                <ScrollBtn><Tri $up $s={4} /></ScrollBtn>
                <ScrollTrack />
                <ScrollThumb $h={63} />
                <ScrollTrack $h={272} />
                <ScrollBtn><Tri $s={4} /></ScrollBtn>
                <ScrollPlain $h={22}><Tri $up $s={4} /><Tri $up $s={4} /></ScrollPlain>
                <ScrollPlain $h={21}><Tri $s={4} /><Tri $s={4} /></ScrollPlain>
                <ScrollPlain $h={23} />
              </Scroll>
            </Workspace>
            <NotesBar>Click to add notes</NotesBar>
          </Editor>
        </Main>

        <Status>
          <StatusText $ml={10}>Slide 5 of 9</StatusText>
          <StatusText $ml={24}><SpellIcon /></StatusText>
          <StatusText $ml={19}>English (India)</StatusText>
          <StatusText $ml={68}><AccessIcon />Accessibility: Investigate</StatusText>
          <StatusText $auto $gap={6}><NotesIcon />Notes</StatusText>
          <StatusText $ml={24}><MessageSquare size={17} color="#555" fill="#555" />Comments</StatusText>
          <StatusView $active $w={49} $ml={22}><NormalViewIcon /></StatusView>
          <StatusView><SorterIcon /></StatusView>
          <StatusView><ReadingIcon /></StatusView>
          <StatusView><SlideShowIcon /></StatusView>
          <Zoomer>
            <Minus size={12} color="#555" />
            <ZoomTrack><ZoomThumb /><ZoomTick /></ZoomTrack>
            <Plus size={13} color="#555" />
          </Zoomer>
          <StatusText $ml={16}>41%</StatusText>
          <StatusText $ml={16}><FitIcon /></StatusText>
        </Status>
      </Window>
    </Screen>
  </>
);

export default App;
